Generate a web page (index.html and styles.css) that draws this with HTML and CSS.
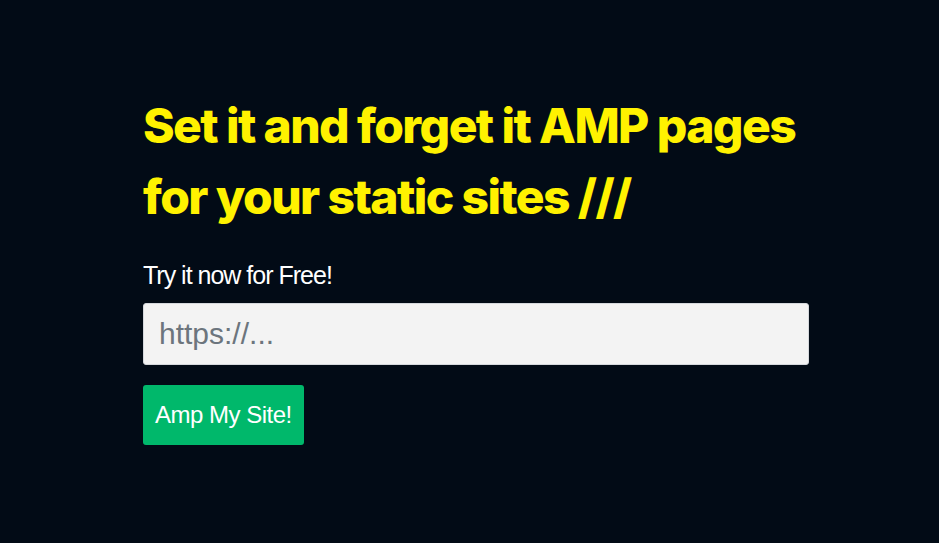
FILE: index.html
```html
<!DOCTYPE html>
<html lang="en">
<head>
<meta charset="utf-8">
<title>Amp My Site</title>
<link rel="stylesheet" href="styles.css">
</head>
<body>
<main class="hero">
  <h1 class="title">Set it and forget it AMP pages for your static sites ///</h1>
  <form class="form">
    <label class="label" for="url">Try it now for Free!</label>
    <input class="input" id="url" type="text" placeholder="https://...">
    <button class="button" type="button">Amp My Site!</button>
  </form>
</main>
</body>
</html>
```
FILE: styles.css
```css
html, body {
  margin: 0;
  padding: 0;
  background: #020b16;
  height: 100%;
}
.hero {
  padding: 90px 0 0 143px;
  font-family: "Liberation Sans", Arial, sans-serif;
}
.title {
  margin: 0;
  width: 680px;
  font-family: Inter, "Liberation Sans", sans-serif;
  font-weight: 800;
  font-size: 48px;
  line-height: 71px;
  letter-spacing: -1.6px;
  color: #fff200;
}
.form {
  display: flex;
  flex-direction: column;
  align-items: flex-start;
  margin-top: 29px;
  width: 666px;
}
.label {
  color: #ffffff;
  font-size: 25px;
  letter-spacing: -1px;
  line-height: 28px;
  margin-bottom: 14px;
}
.input {
  box-sizing: border-box;
  width: 666px;
  height: 62px;
  border: 1px solid #d5d8dc;
  border-radius: 3px;
  background: #f3f3f3;
  padding: 0 15px;
  font-family: "Liberation Sans", Arial, sans-serif;
  font-size: 30px;
  color: #333;
  margin: 0 0 20px 0;
}
.input::placeholder {
  color: #6c757d;
}
.button {
  box-sizing: border-box;
  height: 60px;
  padding: 0 12px;
  border: none;
  border-radius: 3px;
  background: #00b86b;
  color: #ffffff;
  font-family: "Liberation Sans", Arial, sans-serif;
  font-size: 24px;
  letter-spacing: -0.5px;
}
```
